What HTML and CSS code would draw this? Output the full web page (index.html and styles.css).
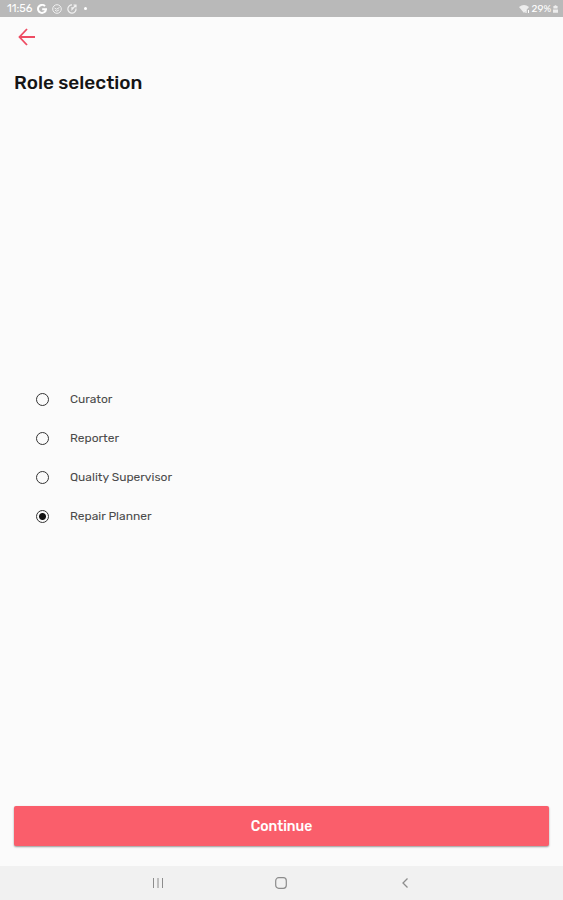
FILE: index.html
```html
<!DOCTYPE html>
<html lang="en">
<head>
  <meta charset="UTF-8">
  <meta name="viewport" content="width=device-width, initial-scale=1">
  <title>Role selection</title>
  <link rel="stylesheet" href="styles.css">
</head>
<body>

  <div class="status-bar">
    <span class="clock">11:56</span>
    <svg width="10" height="10" viewBox="0 0 10 10" fill="none" stroke="#fff" stroke-width="2"><path d="M8 2.2A4 4 0 1 0 9 5.3H5.2"/></svg>
    <svg class="thin" width="10" height="10" viewBox="0 0 10 10" fill="none" stroke="#fff"><circle cx="5" cy="5" r="4.3"/><path d="M2.5 4l2 1.2L7.5 3.5M3 6.2l1.8 1 2.4-1.4"/></svg>
    <svg class="thin" width="10" height="10" viewBox="0 0 10 10" fill="none" stroke="#fff" stroke-width="1.2"><path d="M5 .9A4.100 4.100 0 1 0 9 4.500M5 3v2.400L8.500 1.500M6.500 1h2.500v2.500"/></svg>
    <span class="dot"></span>
    <span class="status-right">
      <svg width="11" height="10" viewBox="0 0 11 10"><path d="M0 3Q5 -1 10 3L5 9z" fill="#fff" opacity=".75"/><path d="M7 9V6M9.500 6v3" stroke="#fff"/></svg>
      <span>29%</span>
      <svg width="5" height="8" viewBox="0 0 6 9" fill="#fff"><path d="M2 0h2v1h1.500v3H.5V1H2zM0 5h6v4H0z" opacity=".75"/></svg>
    </span>
  </div>

  <form class="page">
    <div class="toolbar">
      <button type="button" class="back-btn" aria-label="Back">
        <svg width="18" height="18" viewBox="0 0 18 18" fill="none" stroke="#ee4b62" stroke-width="1.800"><path d="M17 9H2M9 1L1.500 9 9 17"/></svg>
      </button>
    </div>

    <h1>Role selection</h1>

    <div class="roles">
      <label class="role"><input type="radio" name="role" value="curator"> Curator</label>
      <label class="role"><input type="radio" name="role" value="reporter"> Reporter</label>
      <label class="role"><input type="radio" name="role" value="supervisor"> Quality Supervisor</label>
      <label class="role"><input type="radio" name="role" value="planner" checked> Repair Planner</label>
    </div>

    <button type="submit" class="continue-btn">Continue</button>
  </form>

  <nav class="nav-bar">
    <button type="button" aria-label="Recent apps">
      <svg width="12" height="12" viewBox="0 0 12 12" stroke="#8c8c8c"><path d="M1.500 1v10M6 1v10M10.500 1v10"/></svg>
    </button>
    <button type="button" aria-label="Home">
      <svg width="12" height="12" viewBox="0 0 12 12" fill="none" stroke="#8c8c8c" stroke-width="1.200"><rect x=".7" y=".7" width="10.600" height="10.600" rx="3"/></svg>
    </button>
    <button type="button" aria-label="Back">
      <svg width="12" height="12" viewBox="0 0 12 12" fill="none" stroke="#8c8c8c" stroke-width="1.300"><path d="M8.500 1.500L4 6l4.500 4.500"/></svg>
    </button>
  </nav>

</body>
</html>
```
FILE: styles.css
```css
* {
  box-sizing: border-box;
}

body {
  margin: 0;
  min-height: 100vh;
  display: flex;
  flex-direction: column;
  font-family: Rubik, Inter, Roboto, sans-serif;
  background: #fbfbfb;
  color: #151515;
}

button {
  border: none;
  background: none;
  padding: 0;
  font-family: inherit;
  cursor: pointer;
}

svg {
  display: block;
}

.status-bar {
  height: 17px;
  padding: 0 5px 0 7px;
  display: flex;
  align-items: center;
  gap: 5px;
  background: #b9b9b9;
  color: #fff;
  font-size: 10px;
}

.clock {
  font-size: 11px;
}

.thin {
  opacity: 0.8;
}

.dot {
  width: 3px;
  height: 3px;
  margin-left: 2px;
  border-radius: 50%;
  background: #fff;
}

.status-right {
  display: flex;
  align-items: center;
  gap: 2px;
  margin-left: auto;
}

.page {
  flex: 1;
  display: flex;
  flex-direction: column;
  padding: 0 14px 20px;
}

.toolbar {
  display: flex;
  align-items: center;
  height: 40px;
  padding-left: 4px;
}

h1 {
  margin: 0;
  font-size: 19px;
  font-weight: 500;
  line-height: 52px;
}

.roles {
  flex: 1;
  display: flex;
  flex-direction: column;
  justify-content: center;
  align-items: flex-start;
  padding-left: 22px;
}

.role {
  display: flex;
  align-items: center;
  gap: 21px;
  height: 39px;
  font-size: 12px;
  color: #4a4a4a;
}

.role input {
  appearance: none;
  width: 13px;
  height: 13px;
  margin: 0;
  border: 1px solid #333;
  border-radius: 50%;
}

.role input:checked {
  background: radial-gradient(circle, #111 3px, transparent 4px);
}

.continue-btn {
  height: 40px;
  border-radius: 2px;
  background: #fa5e6b;
  color: #fff;
  font-size: 14px;
  font-weight: 500;
  box-shadow: 0 1px 2px rgba(0, 0, 0, 0.4);
}

.nav-bar {
  display: flex;
  justify-content: center;
  height: 34px;
  background: #f1f1f1;
}

.nav-bar button {
  display: flex;
  align-items: center;
  justify-content: center;
  width: 22%;
}
```
